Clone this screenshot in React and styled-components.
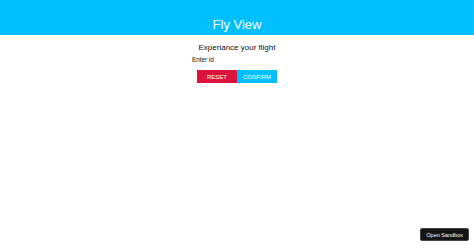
import React, { useState } from 'react';
import styled, { createGlobalStyle } from 'styled-components';

const GlobalStyle = createGlobalStyle`
  html, body {
    margin: 0;
    padding: 0;
    background: #ffffff;
    font-family: "Liberation Sans", Arial, sans-serif;
  }
`;

const Page = styled.div`
  min-height: 248px;
  display: flex;
  flex-direction: column;
`;

const Header = styled.header`
  height: 35px;
  background: #00bfff;
  display: flex;
  align-items: flex-end;
  justify-content: center;
  box-sizing: border-box;
  padding-bottom: 3px;

  h1 {
    margin: 0;
    color: #ffffff;
    font-size: 13px;
    font-weight: normal;
  }
`;

const Main = styled.main`
  display: flex;
  flex-direction: column;
  align-items: center;
  padding-top: 8px;
`;

const Title = styled.h2`
  margin: 0;
  font-size: 8px;
  font-weight: normal;
  color: #111;
`;

const Form = styled.div`
  width: 90px;
  display: flex;
  flex-direction: column;
  margin-top: 4px;
`;

const Label = styled.label`
  font-size: 6.3px;
  color: #111;
`;

const Buttons = styled.div`
  display: flex;
  justify-content: center;
  margin-top: 7px;
`;

const Button = styled.button`
  width: 40px;
  height: 13px;
  border: none;
  padding: 0;
  font-family: inherit;
  font-size: 6px;
  color: #ffffff;
  background: ${(p) => (p.$variant === 'reset' ? '#dc143c' : '#00bfff')};
  cursor: pointer;
`;

const SandboxButton = styled.button`
  position: fixed;
  right: 5px;
  bottom: 7px;
  height: 13px;
  padding: 0 5px;
  border: 1px solid #444;
  border-radius: 2px;
  background: #151515;
  color: #ffffff;
  font-family: inherit;
  font-size: 5.5px;
`;

export default function App() {
  const [id, setId] = useState('');
  return (
    <Page>
      <GlobalStyle />
      <Header>
        <h1>Fly View</h1>
      </Header>
      <Main>
        <Title>Experiance your flight</Title>
        <Form>
          <Label>Enter id</Label>
          <Buttons>
            <Button $variant="reset" onClick={() => setId('')}>RESET</Button>
            <Button $variant="confirm">CONFIRM</Button>
          </Buttons>
        </Form>
      </Main>
      <SandboxButton>Open Sandbox</SandboxButton>
    </Page>
  );
}
